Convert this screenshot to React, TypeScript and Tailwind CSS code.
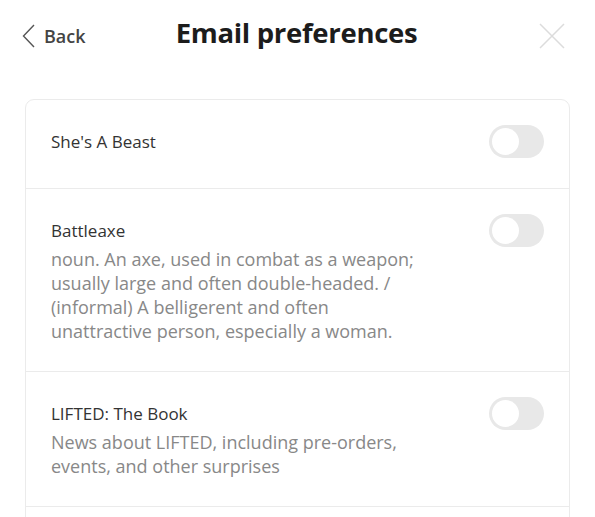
const font = { fontFamily: '"Open Sans", "Noto Sans", "Liberation Sans", sans-serif' };

type Pref = { title: string; desc?: string };

const prefs: Pref[] = [
  { title: "She's A Beast" },
  {
    title: 'Battleaxe',
    desc: 'noun. An axe, used in combat as a weapon; usually large and often double-headed. / (informal) A belligerent and often unattractive person, especially a woman.',
  },
  {
    title: 'LIFTED: The Book',
    desc: 'News about LIFTED, including pre-orders, events, and other surprises',
  },
];

function Toggle() {
  return (
    <div className="w-[55px] h-[33px] rounded-full bg-[#e8e8e8] p-[3px] shrink-0">
      <div className="w-[27px] h-[27px] rounded-full bg-white" />
    </div>
  );
}

function Row({ p, first }: { p: Pref; first: boolean }) {
  return (
    <div
      className={`flex items-start justify-between pl-[25px] pr-[25px] pt-[25px] ${
        first ? 'pb-[30px]' : 'pb-[28px] border-t border-[#ebebeb]'
      }`}
    >
      <div className="w-[372px]">
        <div className="text-[17px] leading-[33px] text-[#333]">{p.title}</div>
        {p.desc && <div className="text-[18px] leading-[24px] text-[#888]">{p.desc}</div>}
      </div>
      <Toggle />
    </div>
  );
}

export default function App() {
  return (
    <div className="w-[595px] h-[517px] bg-white overflow-hidden" style={font}>
      <div className="flex items-center h-[72px] pl-[22px] pr-[30px]">
        <div className="flex items-center gap-[9px] w-[130px] text-[#444]">
          <svg width="13" height="24" viewBox="0 0 13 24" fill="none">
            <path d="M12 1 L1.5 12 L12 23" stroke="#555" strokeWidth="1.4" />
          </svg>
          <span className="text-[18px] font-semibold">Back</span>
        </div>
        <div className="flex-1 flex justify-center">
          <h1 className="text-[27.5px] font-bold text-[#1c1c1c] tracking-[-0.3px] mb-[6px]">Email preferences</h1>
        </div>
        <div className="w-[124px] flex justify-end">
          <svg width="26" height="26" viewBox="0 0 26 26" fill="none">
            <path d="M1 1 L25 25 M25 1 L1 25" stroke="#dcdcdc" strokeWidth="1.5" />
          </svg>
        </div>
      </div>
      <div className="mx-[25px] mt-[27px] border border-[#ebebeb] rounded-[9px]">
        {prefs.map((p, i) => (
          <Row key={p.title} p={p} first={i === 0} />
        ))}
        <div className="border-t border-[#ebebeb] h-[40px]" />
      </div>
    </div>
  );
}
